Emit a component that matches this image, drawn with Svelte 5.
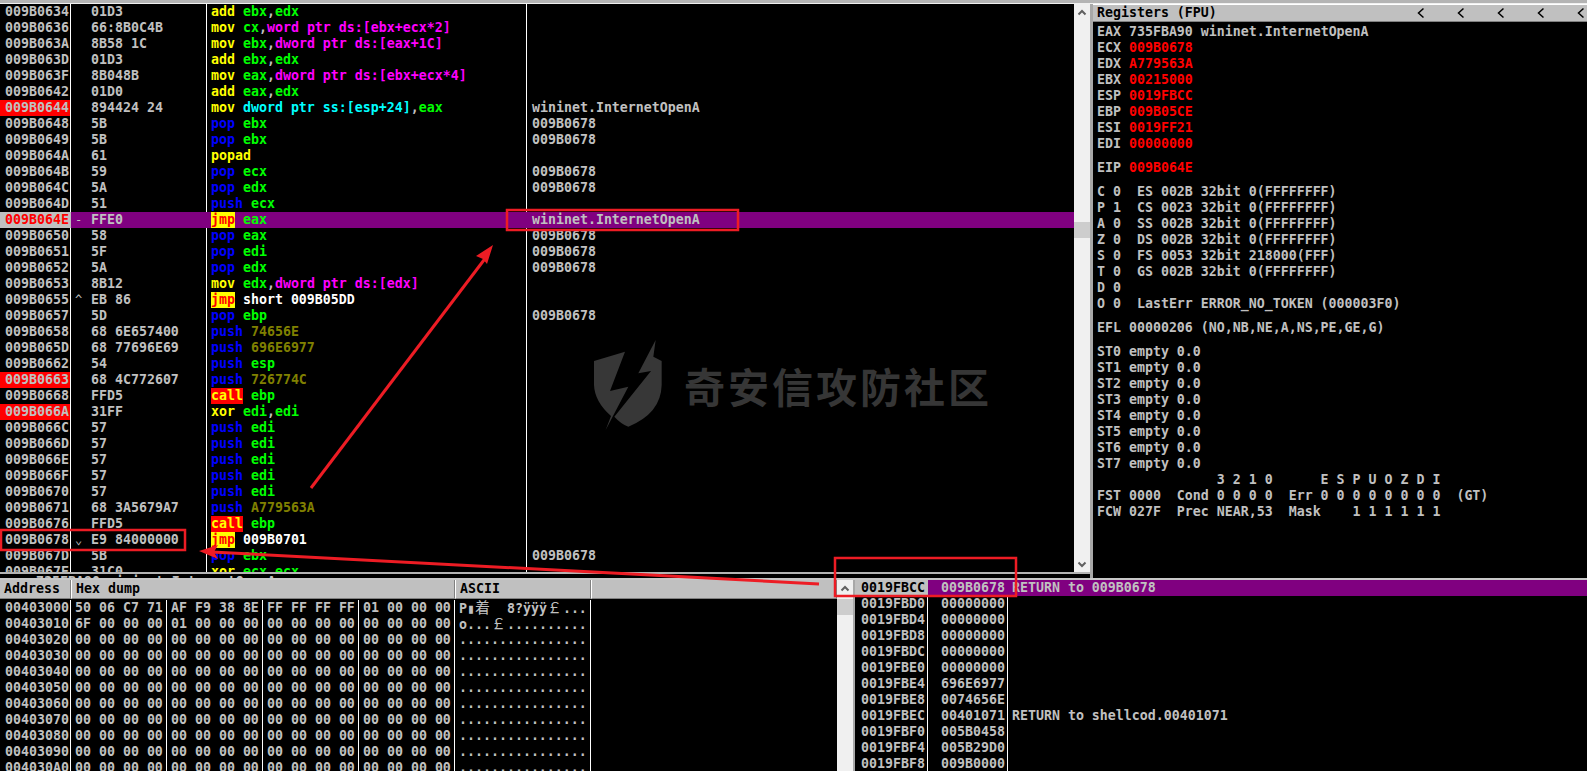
<script lang="ts">
  // [address, jump mark, hex, command, comment, flag]
  const code = [
    ["009B0634", "", "01D3", "add ebx,edx", ""],
    ["009B0636", "", "66:8B0C4B", "mov cx,word ptr ds:[ebx+ecx*2]", ""],
    ["009B063A", "", "8B58 1C", "mov ebx,dword ptr ds:[eax+1C]", ""],
    ["009B063D", "", "01D3", "add ebx,edx", ""],
    ["009B063F", "", "8B048B", "mov eax,dword ptr ds:[ebx+ecx*4]", ""],
    ["009B0642", "", "01D0", "add eax,edx", ""],
    ["009B0644", "", "894424 24", "mov dword ptr ss:[esp+24],eax", "wininet.InternetOpenA", "bp"],
    ["009B0648", "", "5B", "pop ebx", "009B0678"],
    ["009B0649", "", "5B", "pop ebx", "009B0678"],
    ["009B064A", "", "61", "popad", ""],
    ["009B064B", "", "59", "pop ecx", "009B0678"],
    ["009B064C", "", "5A", "pop edx", "009B0678"],
    ["009B064D", "", "51", "push ecx", ""],
    ["009B064E", "-", "FFE0", "jmp eax", "wininet.InternetOpenA", "eip"],
    ["009B0650", "", "58", "pop eax", "009B0678"],
    ["009B0651", "", "5F", "pop edi", "009B0678"],
    ["009B0652", "", "5A", "pop edx", "009B0678"],
    ["009B0653", "", "8B12", "mov edx,dword ptr ds:[edx]", ""],
    ["009B0655", "^", "EB 86", "jmp short 009B05DD", ""],
    ["009B0657", "", "5D", "pop ebp", "009B0678"],
    ["009B0658", "", "68 6E657400", "push 74656E", ""],
    ["009B065D", "", "68 77696E69", "push 696E6977", ""],
    ["009B0662", "", "54", "push esp", ""],
    ["009B0663", "", "68 4C772607", "push 726774C", "", "bp"],
    ["009B0668", "", "FFD5", "call ebp", ""],
    ["009B066A", "", "31FF", "xor edi,edi", "", "bp"],
    ["009B066C", "", "57", "push edi", ""],
    ["009B066D", "", "57", "push edi", ""],
    ["009B066E", "", "57", "push edi", ""],
    ["009B066F", "", "57", "push edi", ""],
    ["009B0670", "", "57", "push edi", ""],
    ["009B0671", "", "68 3A5679A7", "push A779563A", ""],
    ["009B0676", "", "FFD5", "call ebp", ""],
    ["009B0678", "⌄", "E9 84000000", "jmp 009B0701", ""],
    ["009B067D", "", "5B", "pop ebx", "009B0678"],
    ["009B067E", "", "31C0", "xor ecx,ecx", ""]
  ];

  const regNames = /^(eax|ebx|ecx|edx|esi|edi|esp|ebp|cx)$/;

  function opClass(op: string) {
    if (op === "jmp") return "op-jmp";
    if (op === "call") return "op-call";
    if (op === "push" || op === "pop") return "op-stack";
    return "op";
  }

  function argClass(op: string, arg: string) {
    if (regNames.test(arg)) return "reg";
    if (arg.includes("ss:")) return "stackmem";
    if (arg.includes("ds:")) return "mem";
    if (op === "jmp") return "target";
    return "const";
  }

  function parse(command: string) {
    const i = command.indexOf(" ");
    if (i < 0) return { op: command, args: [] };
    const op = command.slice(0, i);
    const args = command.slice(i + 1).split(",");
    return { op, args };
  }

  const regs = [
    ["EAX", "735FBA90", "wininet.InternetOpenA"],
    ["ECX", "009B0678"],
    ["EDX", "A779563A"],
    ["EBX", "00215000"],
    ["ESP", "0019FBCC"],
    ["EBP", "009B05CE"],
    ["ESI", "0019FF21"],
    ["EDI", "00000000"]
  ];

  const flags = [
    "C 0  ES 002B 32bit 0(FFFFFFFF)",
    "P 1  CS 0023 32bit 0(FFFFFFFF)",
    "A 0  SS 002B 32bit 0(FFFFFFFF)",
    "Z 0  DS 002B 32bit 0(FFFFFFFF)",
    "S 0  FS 0053 32bit 218000(FFF)",
    "T 0  GS 002B 32bit 0(FFFFFFFF)",
    "D 0",
    "O 0  LastErr ERROR_NO_TOKEN (000003F0)"
  ];

  const fpu = [
    ...[0, 1, 2, 3, 4, 5, 6, 7].map((n) => `ST${n} empty 0.0`),
    "               3 2 1 0      E S P U O Z D I",
    "FST 0000  Cond 0 0 0 0  Err 0 0 0 0 0 0 0 0  (GT)",
    "FCW 027F  Prec NEAR,53  Mask    1 1 1 1 1 1"
  ];

  const zeros = "00 00 00 00";
  const zeroRows = ["20", "30", "40", "50", "60", "70", "80", "90", "A0"].map((a) => ({
    addr: "004030" + a,
    hex: [zeros, zeros, zeros, zeros],
    ascii: [{ t: "................" }]
  }));
  const dump = [
    {
      addr: "00403000",
      hex: ["50 06 C7 71", "AF F9 38 8E", "FF FF FF FF", "01 00 00 00"],
      ascii: [{ t: "P▮" }, { t: "着", wide: true }, { t: "  8?ÿÿÿ" }, { t: "￡", wide: true }, { t: "..." }]
    },
    {
      addr: "00403010",
      hex: ["6F 00 00 00", "01 00 00 00", zeros, zeros],
      ascii: [{ t: "o..." }, { t: "￡", wide: true }, { t: ".........." }]
    },
    ...zeroRows
  ];

  const stack = [
    ["0019FBCC", "009B0678", "RETURN to 009B0678"],
    ["0019FBD0", "00000000", ""],
    ["0019FBD4", "00000000", ""],
    ["0019FBD8", "00000000", ""],
    ["0019FBDC", "00000000", ""],
    ["0019FBE0", "00000000", ""],
    ["0019FBE4", "696E6977", ""],
    ["0019FBE8", "0074656E", ""],
    ["0019FBEC", "00401071", "RETURN to shellcod.00401071"],
    ["0019FBF0", "005B0458", ""],
    ["0019FBF4", "005B29D0", ""],
    ["0019FBF8", "009B0000", ""]
  ];
</script>

{#snippet chevron(kind)}
  <svg class="chev" width="16" height="16" viewBox="0 0 16 16">
    {#if kind === "up"}
      <path d="M4.5 10.5 8 7l3.500 3.500" />
    {:else if kind === "down"}
      <path d="M4.5 6.5 8 10l3.500-3.500" />
    {:else}
      <path class="dark" d="M10.5 3.500 5.500 8l5 4.500" />
    {/if}
  </svg>
{/snippet}

<div class="cpu">
  <div class="topline"></div>

  <div class="upper">
    <div class="left">
      <div class="code-pane">
        <div class="code">
          {#each code as [addr, mark, hex, command, comment, flag]}
            {@const p = parse(command)}
            <div class="row" class:eip={flag === "eip"}>
              <div class="c addr" class:bp={flag === "bp"}>{addr}</div>
              <div class="c hex"><span class="mark">{mark}</span>{hex}</div>
              <div class="c asm"><span class={opClass(p.op)}>{p.op}</span>{p.args.length ? " " : ""}{#each p.args as arg, i}{i ? "," : ""}<span class={argClass(p.op, arg)}>{arg}</span>{/each}</div>
              <div class="c note">{comment}</div>
            </div>
          {/each}
        </div>
        <div class="vbar">
          <div class="btn">{@render chevron("up")}</div>
          <div class="thumb code-thumb"></div>
          <div class="grow"></div>
          <div class="btn">{@render chevron("down")}</div>
        </div>
      </div>
      <div class="info">735FBA90 wininet.InternetOpenA</div>
    </div>

    <div class="regs">
      <div class="reg-title">
        <span>Registers (FPU)</span>
        <div class="reg-arrows">
          {#each [0, 1, 2, 3, 4] as _}{@render chevron("left")}{/each}
        </div>
      </div>
      <div class="reg-body">
        <div class="group">
          {#each regs as [name, value, sym]}
            <div class="line">{name} <span class:changed={!sym}>{value}</span>{sym ? " " + sym : ""}</div>
          {/each}
        </div>
        <div class="group"><div class="line">EIP <span class="changed">009B064E</span></div></div>
        <div class="group">
          {#each flags as line}<div class="line">{line}</div>{/each}
        </div>
        <div class="group"><div class="line">EFL 00000206 (NO,NB,NE,A,NS,PE,GE,G)</div></div>
        <div class="group">
          {#each fpu as line}<div class="line">{line}</div>{/each}
        </div>
      </div>
    </div>
  </div>

  <div class="lower">
    <div class="dump">
      <div class="dump-head">
        <div class="hcell h-addr">Address</div>
        <div class="hcell h-hex">Hex dump</div>
        <div class="hcell h-ascii">ASCII</div>
        <div class="hcell h-rest"></div>
      </div>
      {#each dump as line}
        <div class="dump-row">
          <div class="d-addr">{line.addr}</div>
          {#each line.hex as group}<div class="d-hex">{group}</div>{/each}
          <div class="d-ascii">{#each line.ascii as part}<span class:wide={part.wide}>{part.t}</span>{/each}</div>
        </div>
      {/each}
    </div>

    <div class="vbar stack-bar">
      <div class="btn">{@render chevron("up")}</div>
      <div class="thumb stack-thumb"></div>
    </div>

    <div class="stack">
      {#each stack as [addr, value, comment], i}
        <div class="stack-row" class:top={i === 0}>
          <div class="s-addr">{addr}</div>
          <div class="s-val">{value}</div>
          <div class="s-note">{comment}</div>
        </div>
      {/each}
    </div>
  </div>

  <!-- annotations drawn over the screenshot -->
  <div class="mark-logo">
    <svg width="90" height="100" viewBox="0 0 270 300">
      <path d="M120 50 27 78v72q2 50 51 93l-16 42 68-130-55 13z" />
      <path d="M212 15 160 115l38-7L88 245q20 22 42 30 98-40 100-125V78l-25-13z" />
    </svg>
    <span class="logo-text">奇安信攻防社区</span>
  </div>

  <svg class="notes" width="1587" height="771" viewBox="0 0 1587 771">
    <rect x="507" y="210" width="231" height="20" />
    <rect x="1" y="530" width="184" height="20" />
    <rect x="835" y="558" width="181" height="38" />
    <line x1="311" y1="488" x2="487" y2="256" />
    <polygon points="493,245 476,256 483,259 487,264" />
    <line x1="819" y1="584" x2="212" y2="552" />
    <polygon points="199,551 218,545 214,552 218,559" />
  </svg>
</div>

<style>
  :global(body) {
    margin: 0;
    background: #000;
  }

  .cpu {
    position: relative;
    width: 1587px;
    height: 771px;
    overflow: hidden;
    background: #000;
    color: #c0c0c0;
    font-family: "DejaVu Sans Mono", "Liberation Mono", "Noto Sans CJK SC", monospace;
    font-size: 13.28px;
    font-weight: 700;
    line-height: 16px;
  }

  .c,
  .line,
  .info,
  .d-hex,
  .d-ascii {
    white-space: pre;
  }

  .topline {
    height: 3px;
    background: #b4b4b4;
    border-bottom: 1px solid #f0f0f0;
  }

  .upper {
    display: flex;
    height: 574px;
  }

  .left {
    width: 1090px;
    border-right: 3px solid #a8a8a8;
  }

  .code-pane {
    display: flex;
    height: 568px;
    border-bottom: 2px solid #b4b4b4;
  }

  .code {
    width: 1074px;
    overflow: hidden;
  }

  .row {
    display: grid;
    grid-template-columns: 71px 136px 320px 1fr;
    height: 16px;
  }

  .c {
    border-right: 1px solid #fff;
    overflow: hidden;
  }

  .addr {
    padding-left: 5px;
  }

  .hex {
    padding-left: 4px;
  }

  .mark {
    display: inline-block;
    width: 16px;
    font-size: 12px;
    font-weight: 400;
  }

  .asm {
    padding-left: 4px;
  }

  .note {
    padding-left: 5px;
    border-right: none;
  }

  .bp {
    background: #f00;
  }

  .eip {
    background: #800080;
  }

  .eip .c {
    border-right-color: #800080;
  }

  .eip .addr {
    background: #c0c0c0;
    color: #f00;
    border-right-color: #c0c0c0;
  }

  .op {
    color: #ff0;
  }

  .op-stack {
    color: #00f;
  }

  .op-jmp {
    display: inline-block;
    background: #ff0;
    color: #f00;
  }

  .op-call {
    display: inline-block;
    background: #f00;
    color: #ff0;
  }

  .reg {
    color: #0f0;
  }

  .mem {
    color: #f0f;
  }

  .stackmem {
    color: #0ff;
  }

  .const {
    color: #808000;
  }

  .target {
    color: #fff;
  }

  .vbar {
    display: flex;
    flex-direction: column;
    width: 16px;
    background: #f0f0f0;
  }

  .btn {
    height: 16px;
  }

  .chev {
    display: block;
    fill: none;
    stroke: #606060;
    stroke-width: 2;
  }

  .chev .dark {
    stroke: #000;
    stroke-width: 1.5;
  }

  .thumb {
    height: 16px;
    background: #cdcdcd;
  }

  .code-thumb {
    margin-top: 202px;
  }

  .stack-thumb {
    margin-top: 3px;
  }

  .grow {
    flex: 1;
  }

  .info {
    height: 4px;
    padding-left: 36px;
    overflow: hidden;
  }

  .regs {
    flex: 1;
    min-width: 0;
  }

  .reg-title {
    display: flex;
    justify-content: space-between;
    height: 18px;
    padding-left: 4px;
    box-sizing: border-box;
    background: #c0c0c0;
    border-top: 1px solid #fff;
    border-bottom: 1px solid #808080;
    color: #000;
    line-height: 16px;
  }

  .reg-arrows {
    display: flex;
    gap: 24px;
    margin-right: -2px;
  }

  .reg-body {
    padding: 2px 0 0 4px;
  }

  .group + .group {
    margin-top: 8px;
  }

  .changed {
    color: #f00;
  }

  .lower {
    display: flex;
    height: 191px;
    border-top: 2px solid #c8c8c8;
  }

  .dump {
    width: 837px;
    overflow: hidden;
  }

  .dump-head {
    display: grid;
    grid-template-columns: 71px 384px 136px 1fr;
    height: 19px;
    margin-bottom: 1px;
  }

  .hcell {
    box-sizing: border-box;
    padding-left: 4px;
    background: #c0c0c0;
    border-left: 1px solid #fff;
    border-right: 1px solid #808080;
    border-bottom: 1px solid #808080;
    color: #000;
    line-height: 17px;
  }

  .h-addr {
    border-left: none;
  }

  .dump-row {
    display: grid;
    grid-template-columns: 71px repeat(4, 96px) 136px;
    height: 16px;
  }

  .d-addr {
    padding-left: 5px;
    border-right: 1px solid #fff;
  }

  .d-hex {
    padding-left: 4px;
    border-right: 1px solid #fff;
  }

  .d-ascii {
    padding-left: 4px;
    border-right: 1px solid #fff;
  }

  .wide {
    display: inline-block;
    width: 16px;
    font-family: "Noto Sans CJK SC", sans-serif;
    font-size: 15px;
    font-weight: 400;
    line-height: 14px;
  }

  .stack-bar {
    border-right: 2px solid #a8a8a8;
  }

  .stack {
    flex: 1;
    min-width: 0;
  }

  .stack-row {
    display: grid;
    grid-template-columns: 73px 80px 1fr;
    height: 16px;
  }

  .s-addr {
    padding-left: 6px;
    border-right: 1px solid #fff;
  }

  .s-val {
    padding-left: 13px;
    border-right: 1px solid #fff;
  }

  .s-note {
    padding-left: 4px;
  }

  .top {
    background: #800080;
  }

  .top .s-addr {
    background: #c0c0c0;
    color: #000;
    border-right-color: #c0c0c0;
  }

  .top .s-val {
    border-right-color: #800080;
  }

  .mark-logo {
    position: absolute;
    left: 585px;
    top: 335px;
    display: flex;
    align-items: center;
    gap: 9px;
    pointer-events: none;
  }

  .mark-logo path {
    fill: #373737;
  }

  .logo-text {
    font-family: "Noto Sans CJK SC", sans-serif;
    font-size: 41px;
    font-weight: 700;
    letter-spacing: 3px;
    line-height: 50px;
    color: #363636;
    margin-top: 0;
  }

  .notes {
    position: absolute;
    left: 0;
    top: 0;
    pointer-events: none;
    fill: none;
    stroke: #ed1c24;
    stroke-width: 3;
  }

  .notes rect {
    stroke-width: 2.5;
  }

  .notes polygon {
    fill: #ed1c24;
    stroke: none;
  }
</style>
